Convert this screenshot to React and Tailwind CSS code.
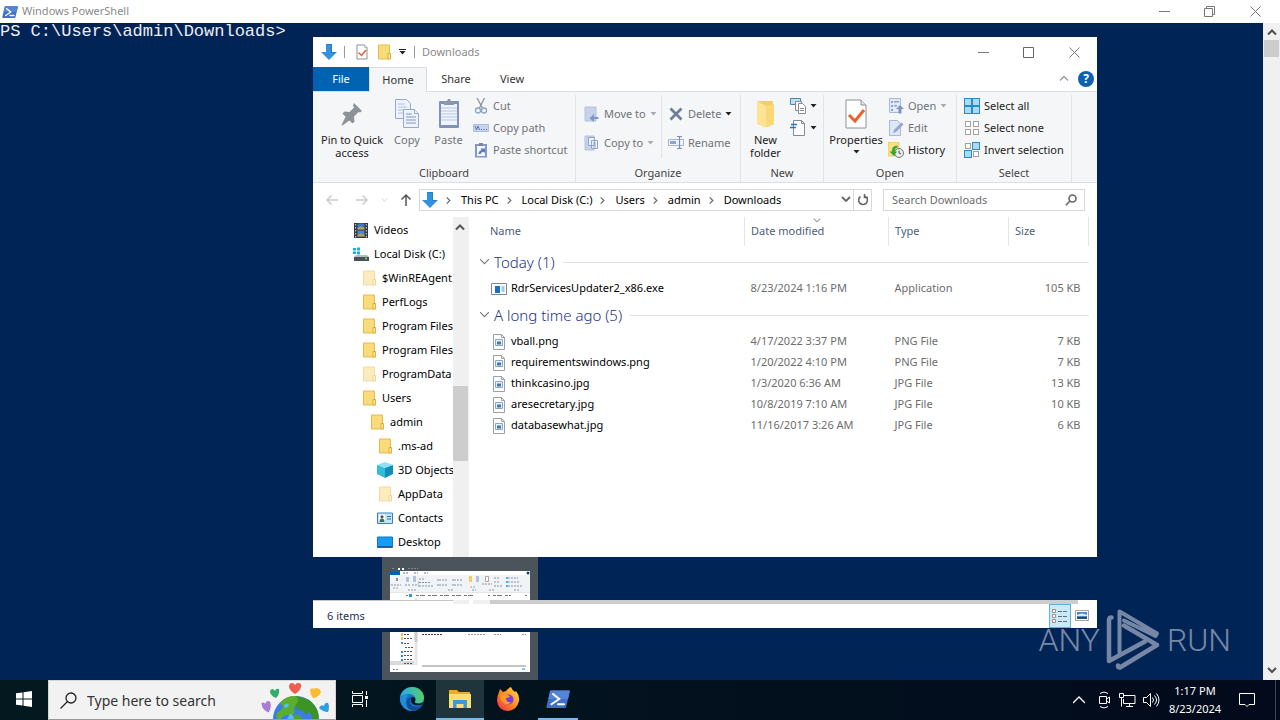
import React from "react";

const Chevron = ({ d = "M1 2l4 4 4-4", color = "#666", w = 10, sw = 1.3, className = "" }) => (
  <svg width={w} height={w} viewBox="0 0 10 10" fill="none" stroke={color} strokeWidth={sw} className={`shrink-0 ${className}`}>
    <path d={d} />
  </svg>
);

const Caret = ({ color = "#222" }) => (
  <svg width="7" height="4" viewBox="0 0 7 4" className="shrink-0">
    <path d="M0.5 0h6L3.5 3.5z" fill={color} />
  </svg>
);

const DownArrow = () => (
  <svg width="16" height="16" viewBox="0 0 16 16" className="shrink-0">
    <path d="M5 0h6v8h5l-8 8-8-8h5z" fill="#3391e2" />
    <path d="M5.5.5h5v8h4" fill="none" stroke="#1f76c4" strokeWidth=".8" />
  </svg>
);

const Folder = ({ faded }) => (
  <svg width="16" height="16" viewBox="0 0 16 16" className="shrink-0" opacity={faded ? 0.5 : 1}>
    <path d="M2.500 1h11v14h-11z" fill="#fbdb79" stroke="#e3bb52" />
    <path d="M12 9.500h2.500V15H12z" fill="#ffe793" stroke="#dcae38" />
  </svg>
);

const FolderLarge = () => (
  <svg width="32" height="32" viewBox="0 0 32 32">
    <path d="M8 3h14q1 0 1 1v23H8z" fill="#f6cd64" />
    <path d="M7 3l9 5v21q-1 1-2 0L7 26z" fill="#ffe394" />
    <path d="M16 8l8-2v20l-6 3h-2z" fill="#fbd775" />
  </svg>
);

const PsLogo = ({ size = 16 }) => (
  <svg width={size} height={size} viewBox="0 0 24 24" className="shrink-0">
    <path d="M5 3.500h18q1 0 .8 1l-3.600 15.500q-.3 1-1.300 1H1.200q-1 0-.8-1L4 4.500q.2-1 1-1z" fill="#3f6fc6" />
    <path d="M5 3.500h18q1 0 .8 1L22 12 2.300 12 4 4.500q.2-1 1-1z" fill="#5583d6" />
    <path d="M7 7l6.200 5L5.500 17.300M12 17.300h6" stroke="#fff" strokeWidth="2" fill="none" strokeLinecap="round" />
  </svg>
);

const PropsIcon = ({ size = 16 }) => (
  <svg width={size} height={size} viewBox="0 0 32 32">
    <path d="M6 2h15l5 5v23H6z" fill="#fff" stroke="#8a9199" strokeWidth={size > 20 ? 1 : 2} />
    <path d="M21 2v5h5" fill="#dfe4ea" stroke="#8a9199" />
    <path d="M9 17l6 6 9-11" fill="none" stroke="#e8622b" strokeWidth="3" />
  </svg>
);

const PinIcon = () => (
  <svg width="32" height="32" viewBox="0 0 32 32">
    <g fill="#8d9297">
      <path d="M18 5l8 8-2 1.500-1.500-.5-4.500 4.500.5 5-2 2-10-10 2-2 5 .5 4.500-4.500-1-2z" />
      <path d="M10 18l4 4-7.500 5.500L5.500 27z" />
    </g>
  </svg>
);

const CopyIcon = () => (
  <svg width="32" height="32" viewBox="0 0 32 32" stroke="#96a8cb" fill="#eef3fb">
    <path d="M4.500 1.500h11l4 4v15h-15z" />
    <path d="M7 6h7M7 9h9M7 12h9M7 15h9" stroke="#b4c2de" />
    <path d="M12.500 11.500h11l4 4v14h-15z" />
    <path d="M23.500 11.500v4h4" />
    <path d="M15 16h6M15 19h10M15 22h10M15 25h10" stroke="#7d94c2" />
  </svg>
);

const PasteIcon = () => (
  <svg width="32" height="32" viewBox="0 0 32 32">
    <rect x="6" y="3" width="20" height="27" rx="1" fill="#7e92bb" />
    <path d="M8 6h16v21H8z" fill="#f0f4fc" />
    <path d="M8 10h16M8 13h16M8 16h16M8 19h16M8 22h16" stroke="#b8c7e4" />
    <path d="M11 3h3l1-2h2l1 2h3v4H11z" fill="#8b97ae" />
  </svg>
);

const CutIcon = () => (
  <svg width="16" height="16" viewBox="0 0 16 16" fill="none" stroke="#8ea1c4" strokeWidth="1.300">
    <path d="M4 0l5.500 10M11.500 0L6.500 10" stroke="#8c939f" />
    <circle cx="5" cy="12.500" r="2.500" />
    <circle cx="11" cy="12.500" r="2.500" />
  </svg>
);

const CopyPathIcon = () => (
  <svg width="16" height="16" viewBox="0 0 16 16">
    <path d="M.5 4.500h15v7H.5z" fill="#c8d5f0" stroke="#aebddd" />
    <path d="M2 6l1.500 4L5 6l1.500 4" stroke="#5a75b5" fill="none" />
    <path d="M8 9.500h1M10.500 9.500h1M13 9.500h1" stroke="#4565ac" />
  </svg>
);

const PasteShortcutIcon = () => (
  <svg width="16" height="16" viewBox="0 0 16 16">
    <path d="M2 2h12v13.500H2z" fill="#8299c5" />
    <path d="M4 4h8v10H4z" fill="#f2f5fb" />
    <path d="M6 1h4v3H6z" fill="#7a879f" />
    <path d="M5.500 12q0-3 3-4L7.500 6.500H12V11l-1.300-1.300Q8 10 7.500 12z" fill="#5c7ab5" />
  </svg>
);

const MoveIcon = () => (
  <svg width="16" height="16" viewBox="0 0 16 16">
    <path d="M1 1h11v14H1z" fill="#c6d2ea" stroke="#b3c2df" />
    <path d="M14.500 11H10V8l-4.500 4.200L10 16v-3h4.500z" fill="#7f97c6" />
  </svg>
);

const CopyToIcon = () => (
  <svg width="16" height="16" viewBox="0 0 16 16" stroke="#8fa5d0">
    <path d="M1 1h9v14H1z" fill="#c6d2ea" stroke="#b3c2df" />
    <path d="M4.500 2.500h6v8h-6zM7.500 5.500h6v8h-6z" fill="#eef3fc" />
    <path d="M9 8h3M9 10h3M9 12h3" />
  </svg>
);

const DeleteIcon = () => (
  <svg width="16" height="16" viewBox="0 0 16 16">
    <path d="M2.500 2.500l11 11M13.500 2.500l-11 11" stroke="#6d7e9c" strokeWidth="2.800" />
  </svg>
);

const RenameIcon = () => (
  <svg width="16" height="16" viewBox="0 0 16 16" fill="none">
    <path d="M.5 4.500h15v6H.5z" fill="#f0f4fb" stroke="#a3b4d5" />
    <path d="M2 6h6v3H2z" fill="#8da4d2" />
    <path d="M9 1.500h5M11.500 1.500v12M9 13.500h5" stroke="#7f90af" strokeWidth="1.200" />
  </svg>
);

const NewItemIcon = () => (
  <svg width="16" height="16" viewBox="0 0 16 16" fill="#fff" stroke="#838b94">
    <path d="M.5.5h10v6H.5z" fill="#bfe0f7" stroke="#4c86ad" />
    <path d="M5.500 3.500h6v9h-6z" />
    <path d="M8.500 5.500h4l3 3v7h-7z" />
    <path d="M10 10.500h4M10 12.500h4" />
  </svg>
);

const EasyAccessIcon = () => (
  <svg width="16" height="16" viewBox="0 0 16 16" fill="none">
    <path d="M3.500.5h8l3 3v12h-11z" fill="#fff" stroke="#838b94" />
    <path d="M11.500.5v3h3" stroke="#838b94" />
    <path d="M1 4.500h6M0 7.500h6" stroke="#2d74b8" strokeWidth="1.500" />
  </svg>
);

const OpenIcon = () => (
  <svg width="16" height="16" viewBox="0 0 16 16">
    <path d="M1.500.5h11v14h-11z" fill="#e3eaf6" stroke="#a8b8d6" />
    <path d="M3 3h2v2H3zM3 7h2v2H3zM3 11h2v2H3zM6 3h5v1.500H6zM6 7h3v1.500H6z" fill="#8ea3cb" />
    <path d="M12 7l4 4h-2.500v4.500h-3V11H8z" fill="#7e95c2" />
  </svg>
);

const EditIcon = () => (
  <svg width="16" height="16" viewBox="0 0 16 16">
    <path d="M1.500.5h8l3 3v12h-11z" fill="#dee7f6" stroke="#a8b8d6" />
    <path d="M5 13l1-3 7.500-7.500 2 2L8 12z" fill="#93a6cc" />
  </svg>
);

const HistoryIcon = () => (
  <svg width="16" height="16" viewBox="0 0 16 16">
    <path d="M0 0h11v14H0z" fill="#fbe07c" stroke="#e0b84e" strokeWidth=".6" />
    <circle cx="11" cy="11" r="4.500" fill="#e8ebee" stroke="#6f777e" />
    <path d="M11 8.500V11l2 1" stroke="#4d5358" fill="none" />
    <path d="M9.500 3.500Q3.500 4 4 9.500H1.500L6 14l3-4.500H6.800Q6.500 6 9.500 5.500z" fill="#31a634" />
  </svg>
);

// pattern lists the filled squares of the 2x2 grid
const SelectIcon = ({ pattern }) => (
  <svg width="16" height="16" viewBox="0 0 16 16">
    {[0, 1, 2, 3].map((i) => {
      const on = pattern.includes(i);
      const s = on ? 7 : 5;
      return (
        <rect
          key={i}
          x={(i % 2) * 8 + (on ? 0.5 : 1.5)}
          y={Math.floor(i / 2) * 8 + (on ? 0.5 : 1.5)}
          width={s}
          height={s}
          fill={on ? "#a9dcfa" : "#fff"}
          stroke={on ? "#2c8ac9" : "#a4a09c"}
        />
      );
    })}
  </svg>
);

const VideoIcon = () => (
  <svg width="16" height="16" viewBox="0 0 16 16" className="shrink-0">
    <path d="M1 1h14v15H1z" fill="#34373c" />
    <path d="M4.500 1.500h7v6h-7z" fill="#3d77cf" />
    <path d="M4.500 8.500h7v6h-7z" fill="#4c83d3" />
    <path d="M4.500 6q3-3 7 0v1.500h-7zM4.500 13q3-3 7 0v1.500h-7z" fill="#b8a04d" />
    <path d="M2.700 2v14M13.300 2v14" stroke="#dfe2e5" strokeDasharray="1.500 1.500" />
  </svg>
);

const DiskIcon = () => (
  <svg width="16" height="16" viewBox="0 0 16 16" className="shrink-0">
    <path d="M0 2h3v2.500H0zM4 1.500h3v3H4zM0 5.500h3V8H0zM4 5.500h3v3H4z" fill="#18b3dd" />
    <path d="M3 9h11l2 2H1z" fill="#b5babf" />
    <path d="M1 11h15v4H1z" fill="#4a5157" />
    <path d="M12 12.500h2" stroke="#6be06f" strokeWidth="1.300" />
  </svg>
);

const CubeIcon = () => (
  <svg width="16" height="16" viewBox="0 0 16 16" className="shrink-0">
    <path d="M0 3l8-3 8 3-8 3z" fill="#8be3f2" />
    <path d="M0 3l8 3v10l-8-4z" fill="#35bcd9" />
    <path d="M16 3L8 6v10l8-4z" fill="#0d8fb8" />
  </svg>
);

const ContactsIcon = () => (
  <svg width="16" height="16" viewBox="0 0 16 16" className="shrink-0">
    <path d="M.5 3h15v10.500H.5z" fill="#c2e4f7" stroke="#3c83b5" />
    <path d="M2 4.500h6V12H2z" fill="#fff" />
    <circle cx="5" cy="6.800" r="1.600" fill="#49525a" />
    <path d="M2.500 12q0-3.500 2.500-3.500T7.500 12z" fill="#3f6f64" />
    <path d="M10 6.500h4M10 9h4" stroke="#2674ad" />
  </svg>
);

const DesktopIcon = () => (
  <svg width="16" height="16" viewBox="0 0 16 16" className="shrink-0">
    <path d="M.5 3h15v10.500H.5z" fill="#149df5" stroke="#0d77c9" />
    <path d="M1 12h14v1.500H1z" fill="#0b5fa8" />
  </svg>
);

const ExeIcon = () => (
  <svg width="16" height="16" viewBox="0 0 16 16" className="shrink-0">
    <path d="M.5 2.500h15v11H.5z" fill="#fff" stroke="#7f868d" />
    <path d="M1 2.500h14" stroke="#7f868d" />
    <path d="M4 5h5v7H4z" fill="#1272c9" />
    <path d="M10.500 6h3M10.500 8h3M10.500 10h3" stroke="#4b94d6" />
  </svg>
);

const ImageFileIcon = () => (
  <svg width="16" height="16" viewBox="0 0 16 16" className="shrink-0">
    <path d="M2.500.5h8l3 3v12h-11z" fill="#fff" stroke="#9aa0a6" />
    <path d="M10.500.5v3h3" fill="none" stroke="#9aa0a6" />
    <path d="M4.500 5.500h7v6h-7z" fill="#e9f2fa" stroke="#88a5c4" />
    <path d="M6 7.500h4v3H6z" fill="#3f78b8" />
  </svg>
);

const MinIcon = () => (
  <svg width="11" height="11" viewBox="0 0 11 11"><path d="M0 5.500h11" stroke="#777" /></svg>
);
const MaxIcon = () => (
  <svg width="11" height="11" viewBox="0 0 11 11"><path d="M.5.5h10v10H.5z" fill="none" stroke="#666" /></svg>
);
const RestoreIcon = () => (
  <svg width="11" height="11" viewBox="0 0 11 11" fill="none" stroke="#777"><path d="M.5 2.500h8v8h-8zM2.500 2.500v-2h8v8h-2" /></svg>
);
const CloseIcon = () => (
  <svg width="11" height="11" viewBox="0 0 11 11"><path d="M.5.5l10 10M10.500.5l-10 10" stroke="#777" /></svg>
);

const WindowButtons = ({ restore }) => (
  <div className="flex h-full">
    <button aria-label="Minimize" className="flex w-[46px] items-center justify-center"><MinIcon /></button>
    <button aria-label="Maximize" className="flex w-[45px] items-center justify-center">{restore ? <RestoreIcon /> : <MaxIcon />}</button>
    <button aria-label="Close" className="flex w-[46px] items-center justify-center"><CloseIcon /></button>
  </div>
);

const Group = ({ label, children, className = "" }) => (
  <section className={`mt-[3px] flex shrink-0 flex-col border-r border-[#e1e3e5] ${className}`}>
    <div className="flex flex-1 items-start">{children}</div>
    <div className="h-[18px] text-center leading-[18px] text-[#444]">{label}</div>
  </section>
);

const BigButton = ({ icon, lines, muted, caret, className = "" }) => (
  <button className={`flex flex-col items-center pt-[3px] leading-[13px] ${muted ? "text-[#6f7378]" : "text-[#222]"} ${className}`}>
    {icon}
    <span className="mt-[3px] whitespace-pre-line">{lines}</span>
    {caret && <span className="mt-1"><Caret /></span>}
  </button>
);

const SmallButton = ({ icon, text, label, muted = true, caret }) => (
  <button aria-label={label} className={`flex h-[22px] items-center gap-1 whitespace-nowrap ${muted ? "text-[#6f7378]" : "text-[#222]"}`}>
    {icon}
    {text && <span>{text}</span>}
    {caret && <Caret color={caret} />}
  </button>
);

const Ribbon = () => (
  <div className="flex h-[92px] border-y border-[#dcdedf] bg-[#f5f6f7]">
    <Group label="Clipboard" className="w-[263px]">
      <BigButton icon={<PinIcon />} lines={"Pin to Quick\naccess"} className="ml-1 w-[70px]" />
      <BigButton icon={<CopyIcon />} lines="Copy" muted className="w-[40px]" />
      <BigButton icon={<PasteIcon />} lines="Paste" muted className="w-[43px]" />
      <div className="ml-[3px]">
        <SmallButton icon={<CutIcon />} text="Cut" />
        <SmallButton icon={<CopyPathIcon />} text="Copy path" />
        <SmallButton icon={<PasteShortcutIcon />} text="Paste shortcut" />
      </div>
    </Group>
    <Group label="Organize" className="w-[165px]">
      <div className="flex w-[86px] flex-col gap-[7px] border-r border-[#e1e3e5] pb-1 pl-2 pt-2">
        <SmallButton icon={<MoveIcon />} text="Move to" caret="#a6abb0" />
        <SmallButton icon={<CopyToIcon />} text="Copy to" caret="#a6abb0" />
      </div>
      <div className="flex flex-col gap-[7px] pl-[6px] pt-2">
        <SmallButton icon={<DeleteIcon />} text="Delete" caret="#222" />
        <SmallButton icon={<RenameIcon />} text="Rename" />
      </div>
    </Group>
    <Group label="New" className="w-[83px]">
      <BigButton icon={<FolderLarge />} lines={"New\nfolder"} className="w-[49px]" />
      <div>
        <SmallButton icon={<NewItemIcon />} label="New item" caret="#222" />
        <SmallButton icon={<EasyAccessIcon />} label="Easy access" caret="#222" />
      </div>
    </Group>
    <Group label="Open" className="w-[133px]">
      <BigButton icon={<PropsIcon size={32} />} lines="Properties" caret className="ml-[2px] w-[60px]" />
      <div className="ml-[2px]">
        <SmallButton icon={<OpenIcon />} text="Open" caret="#a6abb0" />
        <SmallButton icon={<EditIcon />} text="Edit" />
        <SmallButton icon={<HistoryIcon />} text="History" muted={false} />
      </div>
    </Group>
    <Group label="Select" className="w-[115px]">
      <div className="ml-[7px]">
        <SmallButton icon={<SelectIcon pattern={[0, 1, 2, 3]} />} text="Select all" muted={false} />
        <SmallButton icon={<SelectIcon pattern={[]} />} text="Select none" muted={false} />
        <SmallButton icon={<SelectIcon pattern={[1, 2]} />} text="Invert selection" muted={false} />
      </div>
    </Group>
  </div>
);

const crumbs = ["This PC", "Local Disk (C:)", "Users", "admin", "Downloads"];

const NavArrow = ({ d, color, label }) => (
  <button aria-label={label}>
    <svg width="14" height="14" viewBox="0 0 14 14" fill="none" stroke={color} strokeWidth="1.500"><path d={d} /></svg>
  </button>
);

const AddressBar = () => (
  <div className="flex h-[34px] items-center pl-[12px] pr-3">
    <NavArrow label="Back" d="M13 7H2M6.500 2.500L2 7l4.500 4.500" color="#ccc" />
    <span className="w-[16px]" />
    <NavArrow label="Forward" d="M1 7h11M7.500 2.500L12 7l-4.500 4.500" color="#ccc" />
    <span className="flex w-[30px] justify-center"><Chevron color="#ccc" w={7} /></span>
    <NavArrow label="Up" d="M7 13V2M2.500 6.500L7 2l4.500 4.500" color="#555" />
    <div className="ml-[6px] flex h-[22px] flex-1 items-center border border-[#d9d9d9] pl-[2px]">
      <DownArrow />
      {crumbs.map((c) => (
        <React.Fragment key={c}>
          <Chevron d="M3 1.500l3.500 3.500L3 8.500" w={9} className="ml-[6px] mr-2" />
          <button className="whitespace-nowrap text-black">{c}</button>
        </React.Fragment>
      ))}
      <button aria-label="Previous locations" className="ml-auto mr-[2px]"><Chevron sw={1.8} /></button>
      <button aria-label="Refresh" className="flex h-full w-[18px] items-center justify-center border-l border-[#d9d9d9]">
        <svg width="12" height="12" viewBox="0 0 12 12" fill="none" stroke="#666" strokeWidth="1.600">
          <path d="M4 2.200a4.400 4.400 0 1 0 4.500.3M4.500 0v3.500H1" transform="matrix(-1 0 0 1 12 0)" />
        </svg>
      </button>
    </div>
    <label className="ml-[11px] flex h-[22px] w-[202px] items-center border border-[#d9d9d9] pl-2 pr-[7px]">
      <input type="text" aria-label="Search Downloads" placeholder="Search Downloads" className="min-w-0 flex-1 outline-none placeholder:text-[#6d6d6d]" />
      <svg width="12" height="12" viewBox="0 0 12 12" fill="none" stroke="#666" strokeWidth="1.600">
        <circle cx="7.500" cy="4.500" r="3.500" /><path d="M5 7L.8 11.200" />
      </svg>
    </label>
  </div>
);

const tree = [
  { path: "videos", name: "Videos", icon: <VideoIcon />, pad: "pl-[40px]" },
  { path: "c", name: "Local Disk (C:)", icon: <DiskIcon />, pad: "pl-[40px]" },
  { path: "winre", name: "$WinREAgent", icon: <Folder faded />, pad: "pl-[48px]" },
  { path: "perf", name: "PerfLogs", icon: <Folder />, pad: "pl-[48px]" },
  { path: "pf", name: "Program Files", icon: <Folder />, pad: "pl-[48px]" },
  { path: "pf86", name: "Program Files", icon: <Folder />, pad: "pl-[48px]" },
  { path: "pd", name: "ProgramData", icon: <Folder faded />, pad: "pl-[48px]" },
  { path: "users", name: "Users", icon: <Folder />, pad: "pl-[48px]" },
  { path: "admin", name: "admin", icon: <Folder />, pad: "pl-[56px]" },
  { path: "msad", name: ".ms-ad", icon: <Folder />, pad: "pl-[64px]" },
  { path: "3d", name: "3D Objects", icon: <CubeIcon />, pad: "pl-[64px]" },
  { path: "appdata", name: "AppData", icon: <Folder faded />, pad: "pl-[64px]" },
  { path: "contacts", name: "Contacts", icon: <ContactsIcon />, pad: "pl-[64px]" },
  { path: "desktop", name: "Desktop", icon: <DesktopIcon />, pad: "pl-[64px]" },
];

const fileGroups = [
  {
    title: "Today (1)",
    files: [["RdrServicesUpdater2_x86.exe", "8/23/2024 1:16 PM", "Application", "105 KB"]],
  },
  {
    title: "A long time ago (5)",
    files: [
      ["vball.png", "4/17/2022 3:37 PM", "PNG File", "7 KB"],
      ["requirementswindows.png", "1/20/2022 4:10 PM", "PNG File", "7 KB"],
      ["thinkcasino.jpg", "1/3/2020 6:36 AM", "JPG File", "13 KB"],
      ["aresecretary.jpg", "10/8/2019 7:10 AM", "JPG File", "10 KB"],
      ["databasewhat.jpg", "11/16/2017 3:26 AM", "JPG File", "6 KB"],
    ],
  },
];

const FileTable = () => (
  <table className="mr-2 flex-1 table-fixed self-start border-collapse">
    <colgroup>
      <col />
      <col className="w-[144px]" />
      <col className="w-[120px]" />
      <col className="w-[80px]" />
    </colgroup>
    <thead>
      <tr className="h-[29px] text-left text-[#4c607a]">
        <th className="border-r border-[#e5e5e5] pl-[21px] font-normal">Name</th>
        <th className="relative border-r border-[#e5e5e5] pl-[6px] font-normal">
          Date modified
          <Chevron color="#999" w={8} className="absolute left-[68px] top-0" />
        </th>
        <th className="border-r border-[#e5e5e5] pl-[6px] font-normal">Type</th>
        <th className="border-r border-[#e5e5e5] pl-[6px] font-normal">Size</th>
      </tr>
    </thead>
    {fileGroups.map((g) => (
      <tbody key={g.title}>
        <tr className="h-[32px]">
          <th colSpan={4} className="pl-[10px] font-normal">
            <div className="flex items-center text-[15px] leading-5 text-[#1e3287]">
              <Chevron color="#777" w={11} sw={1} />
              <span className="ml-1 mr-2 font-light">{g.title}</span>
              <span className="h-px flex-1 bg-[#e0e0e0]" />
            </div>
          </th>
        </tr>
        {g.files.map(([name, date, type, size]) => (
          <tr key={name} className="h-[21px] text-[#6d6d6d]">
            <td className="pl-[22px] text-black">
              <span className="flex items-center gap-1">
                {name.endsWith(".exe") ? <ExeIcon /> : <ImageFileIcon />}
                {name}
              </span>
            </td>
            <td className="pl-[6px]">{date}</td>
            <td className="pl-[6px]">{type}</td>
            <td className="pr-2 text-right">{size}</td>
          </tr>
        ))}
      </tbody>
    ))}
  </table>
);

const Explorer = () => (
  <div className="absolute left-[313px] top-[37px] z-20 w-[784px]">
    <div className="flex h-[520px] flex-col overflow-hidden bg-white">
      <header className="flex h-[30px] shrink-0 items-center pl-2 text-[#8a8a8a]">
        <DownArrow />
        <span className="ml-[7px] mr-[9px] h-3 w-px bg-[#999]" />
        <button aria-label="Properties"><PropsIcon /></button>
        <button aria-label="New folder" className="ml-[6px]"><Folder /></button>
        <button aria-label="Customize toolbar" className="ml-[7px] flex flex-col items-center gap-px">
          <span className="h-px w-[7px] bg-[#222]" />
          <Caret />
        </button>
        <span className="ml-2 mr-[7px] h-3 w-px bg-[#999]" />
        <span>Downloads</span>
        <span className="flex-1" />
        <WindowButtons />
      </header>
      <nav className="flex h-6 shrink-0 items-stretch text-[#333]">
        <button className="w-[56px] bg-[#0063b1] text-white">File</button>
        <button className="relative z-10 -mb-px w-[58px] border border-b-0 border-[#dcdedf] bg-[#f5f6f7]">Home</button>
        <button className="w-[58px]">Share</button>
        <button className="w-[54px]">View</button>
        <span className="flex-1" />
        <button aria-label="Collapse ribbon" className="mr-[9px]"><Chevron d="M1 6.500l4-4 4 4" color="#999" /></button>
        <button aria-label="Help" className="mr-[3px] flex h-4 w-4 items-center justify-center self-center rounded-full bg-[#0b62b3] text-[12px] font-bold text-white">?</button>
      </nav>
      <Ribbon />
      <AddressBar />
      <div className="flex min-h-0 flex-1">
        <ul className="w-[140px] shrink-0 overflow-hidden pt-px text-black">
          {tree.map((t) => (
            <li key={t.path} className={`flex h-6 items-center gap-[5px] whitespace-nowrap ${t.pad}`}>
              {t.icon}
              <span>{t.name}</span>
            </li>
          ))}
        </ul>
        <div className="flex w-4 shrink-0 flex-col items-start bg-[#f0f0f0]">
          <Chevron d="M1 6.500l4-4 4 4" color="#555" sw={2} className="ml-[2px] mt-[6px]" />
          <span className="mt-[153px] h-[75px] w-[15px] bg-[#cdcdcd]" />
        </div>
        <FileTable />
      </div>
    </div>
    <footer className="mt-[43px] border-b-4 border-[#012456] bg-white">
      <div className="flex h-[4px]">
        <span className="h-px w-[140px] bg-[#c4c4c4]" />
        <span className="w-4 bg-[#f0f0f0]" />
        <span className="ml-1 w-[17px] bg-[#f0f0f0]" />
        <span className="mr-[19px] flex-1 bg-[#cdcdcd]" />
      </div>
      <div className="flex h-6 items-center pl-[14px] pr-2 text-[#1e3250]">
        <span>6 items</span>
        <button aria-label="Details view" className="ml-auto flex h-6 w-[22px] items-center justify-center border border-[#5bb4dd] bg-[#cbe8f6]">
          <svg width="16" height="14" viewBox="0 0 16 14" fill="none" stroke="#5f6f7a">
            <path d="M.5.5h3v3h-3zM.5 5.500h3v3h-3zM.5 10.500h3v3h-3z" fill="#fff" stroke="#a18f87" />
            <path d="M6 2.500h4M11 2.500h4M6 7.500h4M11 7.500h4M6 12.500h4M11 12.500h4" />
          </svg>
        </button>
        <button aria-label="Large icons view" className="ml-1">
          <svg width="14" height="12" viewBox="0 0 14 12">
            <path d="M.5.5h13v10H.5z" fill="#fff" stroke="#a2a2a2" />
            <path d="M2 2h10v7H2z" fill="#4a86cf" />
            <path d="M2 5q5-3 10 0v1H2z" fill="#dcebf8" />
            <path d="M2 7h10v2H2z" fill="#274c6f" />
          </svg>
        </button>
      </div>
    </footer>
  </div>
);

const Preview = () => (
  <div className="absolute bottom-0 left-[382px] z-10 flex h-[123px] w-[156px] justify-center bg-[#4c545b] pt-[11px]">
    <svg width="140" height="104" viewBox="0 0 140 104">
      <path d="M8 0h2v2H8zM12 0h2v2h-2z" fill="#fff" />
      <path d="M2 .5h2M18 .5h10" stroke="#7f8891" strokeDasharray="2 1" />
      <path d="M0 3h140v101H0z" fill="#fff" />
      <path d="M0 3h10v4H0z" fill="#0063b1" />
      <path d="M0 7h140v17H0z" fill="#f1f4f7" />
      <circle cx="138" cy="5" r="1.500" fill="#12407c" />
      <path d="M13 5h5M24 5h4M34 5h4" stroke="#777" strokeDasharray="2 1" />
      <path d="M1 17h10M15 17h5M22 17h5M29 11h6M29 14.500h12M29 18h15M49 12h9M64 12h9M49 17h9M64 17h9M92 16h10M104 10h6M104 14h5M104 18h8M118 10h10M118 14h12M118 18h14" stroke="#8693a6" strokeDasharray="2 1" />
      <path d="M3 20h6M80 19h5" stroke="#9aa4b1" strokeDasharray="2 1" />
      <path d="M18 22h8M58 22h6M82 22h4M99 22h5M124 22h5" stroke="#9299a1" strokeDasharray="2 1" />
      <path d="M6 10h2v3H6z" fill="#8d9297" />
      <path d="M16 9h3v5h-3zM23 8h3v6h-3zM28 13h1v6h-1zM47 11h2v2h-2zM47 16h2v2h-2zM62 11h2v2h-2zM62 16h2v2h-2zM86 8h3v6h-3z" fill="#b3c2dc" />
      <path d="M79 8h3v6h-3z" fill="#f5cd60" />
      <path d="M95.500 8.500h3v5h-3z" fill="#fff" stroke="#b9a096" />
      <path d="M116 9h2v2h-2zM116 13h2v2h-2zM116 17h2v2h-2z" fill="#59abdf" />
      <path d="M19 26h3v3h-3z" fill="#3391e2" />
      <path d="M0 24.500h140" stroke="#e4e6e8" />
      <path d="M26 27.500h58M103 27.500h18M16 27.500h2" stroke="#777" strokeDasharray="3 1 5 3" />
      <path d="M98 27.500h2M135 27.500h2" stroke="#777" />
      <path d="M26 30v67" stroke="#e6e6e6" strokeWidth="3" />
      <path d="M26 60v14" stroke="#cdcdcd" strokeWidth="3" />
      <path d="M32 62.500h18M32 66.500h20" stroke="#444" strokeDasharray="2 1" />
      <path d="M78 62.500h16M78 66.500h18M104 66.500h7M132 66.500h4" stroke="#999" strokeDasharray="2 1" />
      <path d="M0 93h24v4H0z" fill="#d9d9d9" />
      <path d="M14 66.500h6M14 70.500h8M14 75.500h6M15 79.500h8M14 83.500h9M14 87.500h8M14 91.500h9M14 95.500h9" stroke="#555" strokeDasharray="2 1" />
      <path d="M11 65h2v3h-2zM11 69h2v3h-2z" fill="#f2c14c" />
      <path d="M11 74h2v2h-2zM11 83h2v2h-2zM11 87h2v2h-2zM11 91h2v2h-2z" fill="#2690e0" />
      <path d="M32 98h104" stroke="#c4c4c4" strokeWidth="2" />
      <path d="M3 101.500h6" stroke="#888" strokeDasharray="2 1" />
      <path d="M132 100h3v2h-3z" fill="#7cc8ec" />
    </svg>
  </div>
);

const Watermark = () => (
  <div className="absolute bottom-2 right-[49px] z-30 flex items-center font-[Roboto,sans-serif] text-[32px] font-light leading-none text-[#c3cad9] opacity-60">
    <span>ANY</span>
    <svg width="55" height="64" viewBox="0 0 55 64" fill="none" stroke="#c3cad9" strokeWidth="4.500" strokeLinejoin="round" strokeLinecap="round" className="mx-[6px]">
      <path d="M5.500 9.500q-2.500 0-2.500 3V53l36-19.500" />
      <path d="M13.500 45V3.500L51 25.500l-1.500 2.500L18 12.500" strokeWidth="4" />
      <path d="M18 17.500L51 37 14 59.500q-2 .5-2-2" />
    </svg>
    <span>RUN</span>
  </div>
);

const Earth = () => (
  <svg width="72" height="38" viewBox="0 0 72 38" className="mr-[3px]">
    <circle cx="36" cy="38" r="23" fill="#3d7be8" />
    <path d="M20 22q6-8 16-7 6 3 2 8-5 2-4 6 2 5-4 5-6-1-9 4h-4q-2-6 3-8l3-4z" fill="#5cae2f" />
    <path d="M36 15q14 2 19 10 5 8 3 13h-6q1-4-3-7-2 3-5 1-1-4-6-3-3-2-2-6 4-3 0-8z" fill="#3c9427" />
    <path d="M24 24q3-3 5 0-1 3-4 3zM30 33q3 0 4 5h-7z" fill="#4fc3ee" />
    <path d="M34 34q6-2 8 4h-8z" fill="#4aa52a" />
    <path d="M29 6q0-4 3-4 2 0 3 2 1-2 3-2 4 0 3 4-1 4-6 7-5-3-6-7z" fill="#ef5d51" />
    <path d="M10 11q0-3 3-3l2 2q1-3 4-2 1 5-3 9-5-2-6-6z" fill="#2fae6b" />
    <path d="M50 9q1-3 4-1 2-2 5 0 3 2 1 5-3 4-7 4-3-4-3-8z" fill="#fabb2d" />
    <path d="M1 23q1-2 4 0 0-4 4-3 3 3 1 11-7-1-9-8z" fill="#a97ad6" transform="rotate(10 6 25)" />
    <path d="M59 27q2-4 5-2 1-4 4-3 2 4 0 9-5 0-9-4z" fill="#2f9fe3" />
  </svg>
);

const EdgeIcon = () => (
  <svg width="24" height="24" viewBox="0 0 24 24">
    <defs>
      <linearGradient id="edgeTop" x1="0" x2="1">
        <stop offset="0" stopColor="#2aa7e8" />
        <stop offset="1" stopColor="#55cf68" />
      </linearGradient>
    </defs>
    <circle cx="12" cy="12" r="12" fill="#1671c4" />
    <path d="M0 11C1 4 6 0 12 0c7 0 12 5 12 10.500 0 4-3 6-6 6-2.500 0-4-1-3-2.500 2-3-1-7-5.500-7C5 7 1 9 0 11z" fill="url(#edgeTop)" />
    <path d="M9 8c-3 2-4 5-3 9 1 3 4 6 8 6.500C7 25 0 19 0 11.500 2 8 6 7 9 8z" fill="#2190d9" />
    <path d="M12 10c-3 2-3 7 1 9 3 1.500 7 1 9.500-1.500C20 22 16 24 12.500 23.500 8 22.500 6 19 6.500 15.500 7 12 9.500 10 12 10z" fill="#114c98" />
    <path d="M12 10c-2 3-1 7 3 8 3 .8 6 0 7.500-.8L24 15l-4 1.500c-3 .3-6-.5-5-2.500 1-1.500 0-4-3-4z" fill="#04181f" />
  </svg>
);

const ExplorerIcon = () => (
  <svg width="24" height="24" viewBox="0 0 24 24">
    <path d="M1 3h8l2 2h11v16H1z" fill="#f0a92c" />
    <path d="M1 7h22v14H1z" fill="#fddc72" />
    <path d="M5 13h14v8h-3.500v-4h-7v4H5z" fill="#3a9ad9" />
    <path d="M9 18h6v3H9z" fill="#fddc72" />
  </svg>
);

const FirefoxIcon = () => (
  <svg width="24" height="24" viewBox="0 0 24 24">
    <defs>
      <linearGradient id="fox" x1="1" y1="0" x2="0" y2="1">
        <stop offset="0" stopColor="#ffe14a" />
        <stop offset=".5" stopColor="#ff8a1f" />
        <stop offset="1" stopColor="#f1274f" />
      </linearGradient>
    </defs>
    <path d="M3 5l1-3 3 3 3-1q2-3 5-4 1 3 4 5l1-1q4 5 3 10-2 9-11 10Q2 23.500 1 14q0-5 2-9z" fill="url(#fox)" />
    <circle cx="12.500" cy="12.500" r="5" fill="#7a3ce0" />
    <path d="M4 8q4-2 7 0l3 1q-1 2-4 2 0 5 5 4-3 4-7 1-4-3-4-8z" fill="#ff9a26" />
  </svg>
);

const TaskButton = ({ label, children, className = "" }) => (
  <button aria-label={label} className={`flex h-full w-12 items-center justify-center border-b-2 ${className || "border-transparent"}`}>
    {children}
  </button>
);

const Taskbar = () => (
  <footer className="flex h-10 shrink-0 items-center bg-linear-to-r from-[#03191f] to-[#020a1c] text-white">
    <TaskButton label="Start">
      <svg width="16" height="16" viewBox="0 0 16 16" fill="#fff">
        <path d="M0 2.300L6.500 1.400v6.100H0zM7.500 1.200L16 0v7.500H7.500zM0 8.500h6.500v6.100L0 13.700zM7.500 8.500H16V16l-8.500-1.200z" />
      </svg>
    </TaskButton>
    <label className="flex h-full w-[288px] items-center border border-b-[#999] border-[#d5d5d5] bg-[#f2f2f2] pl-[11px] text-[14px]">
      <svg width="17" height="17" viewBox="0 0 17 17" fill="none" stroke="#222" strokeWidth="1.300" className="shrink-0">
        <circle cx="11" cy="6" r="5" /><path d="M7.500 9.500L.5 16.500" />
      </svg>
      <input type="text" aria-label="Type here to search" placeholder="Type here to search" className="ml-[10px] min-w-0 flex-1 outline-none placeholder:text-[#333]" />
      <Earth />
    </label>
    <TaskButton label="Task view">
      <svg width="16" height="16" viewBox="0 0 16 16" fill="none" stroke="#fff">
        <path d="M.5 0v2.500h10V0M.5 16v-2.500h10V16M.5 4.500h10v7H.5zM14.500 0v4M14.500 9v7" />
        <path d="M13 5h3v3h-3z" fill="#fff" stroke="none" />
      </svg>
    </TaskButton>
    <TaskButton label="Edge" className="ml-1 border-transparent"><EdgeIcon /></TaskButton>
    <TaskButton label="File Explorer" className="border-[#76b9ed] bg-[#20343b]"><ExplorerIcon /></TaskButton>
    <TaskButton label="Firefox"><FirefoxIcon /></TaskButton>
    <button aria-label="Windows PowerShell" className="ml-[6px] flex h-full w-[40px] items-center justify-center border-b-2 border-[#76b9ed]"><PsLogo size={24} /></button>
    <div className="ml-auto flex h-full items-center">
      <button aria-label="Show hidden icons" className="mr-3"><Chevron d="M0 7.500l5-5 5 5" color="#fff" w={12} sw={1.1} /></button>
      <svg width="14" height="18" viewBox="0 0 14 18" fill="none" stroke="#fff" className="mr-2">
        <path d="M2.500 5.500h7v7h-7zM9.500 8l3-2v6l-3-2M3 2.500q4-3 8 0M3 15.500q4 3 8 0" />
      </svg>
      <svg width="17" height="16" viewBox="0 0 17 16" fill="none" stroke="#fff" className="mr-[7px]">
        <path d="M5 3.500h11v8H4.500V7M10.500 11.500v3M7 14.500h7M.5 1.500h4v4h-4zM2.500 5.500v9" />
      </svg>
      <svg width="17" height="16" viewBox="0 0 17 16" fill="none" stroke="#fff" className="mr-2">
        <path d="M.5 5.500h3l4-4v13l-4-4h-3zM9.500 5.500q2 2.500 0 5M11.500 3.500q4 4.500 0 9M13.500 1.500q5 6.500 0 13" />
      </svg>
      <button className="w-[54px] text-center text-[11px] leading-[18px]">
        <span className="block">1:17 PM</span>
        <span className="block">8/23/2024</span>
      </button>
      <button aria-label="Notifications" className="ml-[17px] mr-[20px]">
        <svg width="16" height="16" viewBox="0 0 16 16" fill="none" stroke="#fff">
          <path d="M.5 1.500h15v11H10L8 14.500 6 12.500H.5z" />
        </svg>
      </button>
      <span className="mr-1 h-full w-px bg-[#3c4450]" />
    </div>
  </footer>
);

const App = () => {
  return (
    <div className="flex h-screen flex-col overflow-hidden bg-[#012456] font-['Noto_Sans',sans-serif] text-[11px]">
      <div className="relative flex min-h-0 flex-1 flex-col">
        <header className="flex h-[23px] shrink-0 items-center justify-between bg-white px-[2px] text-[#8a8a8a]">
          <span className="flex items-center gap-1"><PsLogo />Windows PowerShell</span>
          <WindowButtons restore />
        </header>
        <main className="flex min-h-0 flex-1">
          <pre className="flex-1 font-['Liberation_Mono',monospace] text-[17px] leading-[18px] text-[#eeedf0]">{"PS C:\\Users\\admin\\Downloads>"}</pre>
          <div className="flex w-[17px] flex-col items-center bg-[#f0f0f0] pb-1 pt-[5px]">
            <Chevron d="M1 6.500l4-4 4 4" color="#505050" sw={2} />
            <span className="mt-[2px] h-[17px] w-[15px] bg-[#cdcdcd]" />
            <Chevron color="#505050" sw={2} className="mt-auto" />
          </div>
        </main>
        <Preview />
        <Explorer />
        <Watermark />
      </div>
      <Taskbar />
    </div>
  );
};

export default App;
